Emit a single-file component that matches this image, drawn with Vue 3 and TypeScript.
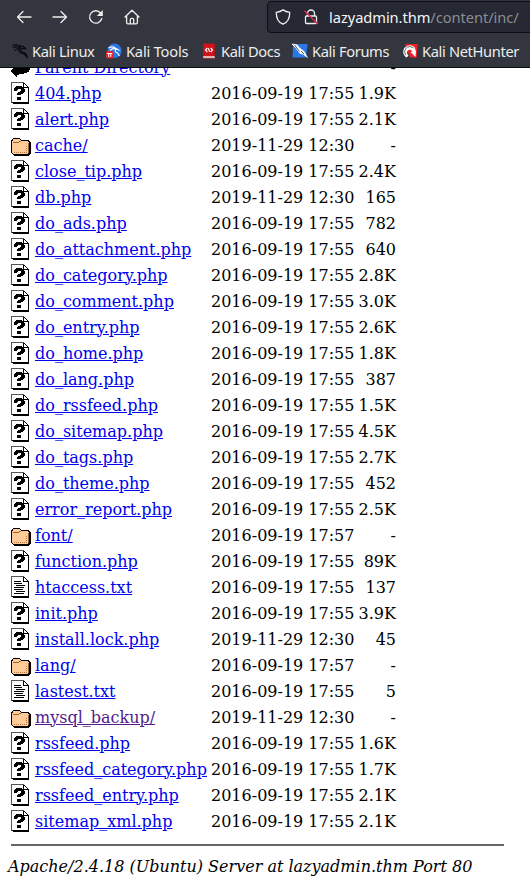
<script setup lang="ts">
type Kind = 'unknown' | 'folder' | 'text' | 'back'
interface Entry { name: string; date: string; size: string; kind: Kind; visited?: boolean }

const OLD = '2016-09-19 17:55'
const OLD_DIR = '2016-09-19 17:57'
const NEW = '2019-11-29 12:30'

function entry(name: string, size: string, date: string = OLD, kind: Kind = 'unknown', visited = false): Entry {
  return { name, size, date, kind, visited }
}

const entries: Entry[] = [
  entry('Parent Directory', '-', '', 'back'),
  entry('404.php', '1.9K'),
  entry('alert.php', '2.1K'),
  entry('cache/', '-', NEW, 'folder'),
  entry('close_tip.php', '2.4K'),
  entry('db.php', '165', NEW),
  entry('do_ads.php', '782'),
  entry('do_attachment.php', '640'),
  entry('do_category.php', '2.8K'),
  entry('do_comment.php', '3.0K'),
  entry('do_entry.php', '2.6K'),
  entry('do_home.php', '1.8K'),
  entry('do_lang.php', '387'),
  entry('do_rssfeed.php', '1.5K'),
  entry('do_sitemap.php', '4.5K'),
  entry('do_tags.php', '2.7K'),
  entry('do_theme.php', '452'),
  entry('error_report.php', '2.5K'),
  entry('font/', '-', OLD_DIR, 'folder'),
  entry('function.php', '89K'),
  entry('htaccess.txt', '137', OLD, 'text'),
  entry('init.php', '3.9K'),
  entry('install.lock.php', '45', NEW),
  entry('lang/', '-', OLD_DIR, 'folder'),
  entry('lastest.txt', '5', OLD, 'text'),
  entry('mysql_backup/', '-', NEW, 'folder', true),
  entry('rssfeed.php', '1.6K'),
  entry('rssfeed_category.php', '1.7K'),
  entry('rssfeed_entry.php', '2.1K'),
  entry('sitemap_xml.php', '2.1K'),
]
</script>

<template>
  <div class="window">
    <header class="chrome">
      <div class="toolbar">
        <svg class="nav" viewBox="0 0 16 16"><path d="M15 8H1.5M7 2.5L1.5 8L7 13.5" /></svg>
        <svg class="nav" viewBox="0 0 16 16"><path d="M1 8h13.500M9 2.500L14.500 8L9 13.500" /></svg>
        <svg class="nav" viewBox="0 0 16 16"><path d="M13.800 9.500A6.200 6.200 0 1 1 12.600 4" /><path class="solid" d="M14.800 1v6H8.800z" /></svg>
        <svg class="nav" viewBox="0 0 16 16"><path d="M1 8L8 1.300L15 8M2.600 7v6.500q0 1.300 1.300 1.300h8.200q1.300 0 1.300-1.300V7M6.300 14.500v-4q0-1.200 1.200-1.200h1q1.200 0 1.200 1.200v4" /></svg>
        <div class="address">
          <svg class="shield" viewBox="0 0 16 16"><path d="M8 .9C6 2.300 3.500 3.100 1.300 3.400C1.200 9 3.700 13.400 8 15.200C12.300 13.400 14.800 9 14.700 3.400C12.500 3.100 10 2.300 8 .9z" /></svg>
          <svg class="lock" viewBox="0 0 16 16"><path d="M4.500 7V4.500a3.500 3.500 0 0 1 7 0V7M3.500 7h9q1 0 1 1v5.500q0 1-1 1h-9q-1 0-1-1V8q0-1 1-1z" /><path class="slash" d="M1.500 1.800L14.800 15" /></svg>
          <span class="url">lazyadmin.thm<span class="path">/content/inc/</span></span>
        </div>
      </div>
      <nav class="bookmarks">
        <a class="bookmark">
          <svg viewBox="0 0 16 16"><path class="dragon" d="M.5 2.500Q5 .8 9 3.400M1 5Q5 3 9 4.800M2.500 8Q4.500 5.500 8.500 5.200M8 3Q11 2.500 13.500 5.500L10.500 5.400Q8 6.500 9 8.300C11 9.800 15 9 15.400 15Q13.500 10.700 9.800 10.400Q6 9.500 7.500 5" /></svg>
          Kali Linux
        </a>
        <a class="bookmark">
          <svg viewBox="0 0 16 16"><circle cx="8.500" cy="7.800" r="7.200" fill="#2878e8" /><path d="M2.500 5Q7 2.500 10 5.600L13.500 7.500M4 7.500Q7 4.500 10 6.500Q8 9 11.500 10L13.500 13" fill="none" stroke="#fff" stroke-width="1.200" /><rect x="0" y="8" width="7.500" height="7.500" rx="2" fill="#e4232c" /><path d="M1.200 10.500h5M2.700 10.500v3.500M4.800 10.500v3.500" stroke="#fff" fill="none" /></svg>
          Kali Tools
        </a>
        <a class="bookmark">
          <svg viewBox="0 0 16 16"><path d="M2.200.500h11.500v12.800H2.200z" fill="#d31118" /><path d="M2.200 13.200h11.500v2H2.200z" fill="#f2dede" /><path d="M2.200 14.800h11.500v.7H2.200z" fill="#c2161a" /><path d="M6.300 5L4.500 7l1.800 2M9.700 5l1.800 2l-1.800 2M7.300 5.200l1.400 3.700" stroke="#fff" stroke-width="1.200" fill="none" /></svg>
          Kali Docs
        </a>
        <a class="bookmark">
          <svg viewBox="0 0 16 16"><path d="M1.200 1h14.600l-2 13.500H.5z" fill="#2878e8" /><path d="M0 1l5 .8l3 3.700l3.700 2.500l3.800 6.500l-4.200-3.200l-3.500-1l-3.300-4.500z" fill="#fff" stroke="#fff" stroke-width=".7" /><path d="M2.500 2l5 6.500M9 8l3 3" stroke="#252830" fill="none" stroke-width=".8" /></svg>
          Kali Forums
        </a>
        <a class="bookmark">
          <svg viewBox="0 0 16 16"><path d="M3 1h12.800l-1 13.500H8z" fill="#ed2026" /><path d="M12.500 4Q7 .2 2.200 5Q-.5 11 4.500 14.500L6.500 12.700Q3.500 9 6.500 7Q9 6 10.500 8.500L8.500 9L13.500 14L14 8.500z" fill="#fff" /><path d="M3.800 12Q1 7 5.500 4Q9 2.800 11.500 5" stroke="#252830" fill="none" stroke-width=".7" /></svg>
          Kali NetHunter
        </a>
      </nav>
    </header>

    <main class="page">
      <ul class="listing">
        <li v-for="item in entries" :key="item.name" class="row">
          <svg v-if="item.kind === 'unknown' || item.kind === 'text'" class="icon" viewBox="0 0 20 22" shape-rendering="crispEdges">
            <path d="M0 0h13v1h1v1h1v1h1v1h1v1h1v17H2v-1H0z" fill="#000" />
            <path d="M1 1h11v5h5v14H1z" fill="#fff" />
            <path d="M13 2h1v1h1v1h1v1h-3z" fill="#fff" />
            <path d="M0 0h1v21H0zM0 0h13v1H0z" fill="#555" />
            <path v-if="item.kind === 'unknown'" d="M5 4h6v1h1v1h1v1h1v3h-1v1h-1v1h-2v1H6v-2h1v-1h2V9h1V7H7v1H6v1H3V6h1V5h1zM6 15h4v3H6z" fill="#000" />
            <path v-else d="M3 5h7v1H3zM3 7h8v1H3zM5 9h9v1H5zM3 11h10v1H3zM3 13h9v1H3zM5 15h9v1H5zM3 17h10v1H3z" fill="#000" />
          </svg>
          <svg v-else-if="item.kind === 'folder'" class="icon" viewBox="0 -2 20 22" shape-rendering="crispEdges">
            <path d="M2 2h7v1h1v1h8v1h1v1h1v12h-1v1h-1v1H3v-1H2v-1H1v-1H0V4h1V3h1z" fill="#000" />
            <path d="M2 3h7v1h1v1h7v1h1v11h-1v1H2v-1H1V5h1z" fill="#ffcc99" />
            <path d="M2 6h6v1H2zM8 5h2v1H8zM17 7h1v10h-1z" fill="#996633" />
            <path d="M3 16h1v1H3zM5 16h1v1H5zM7 16h1v1H7zM9 16h1v1H9zM11 16h1v1h-1zM13 16h1v1h-1zM15 16h1v1h-1zM15 14h1v1h-1zM15 12h1v1h-1zM15 10h1v1h-1z" fill="#b87542" />
          </svg>
          <svg v-else class="icon" viewBox="0 0 20 22" shape-rendering="crispEdges">
            <path d="M0 14h1v-1h1v-1h2v-2h3v1h6V9h6v5h-1v2h-2v1h-3v1H8v1H6v2H5v-1H4v-1H3v-1H2v-1H1v-1H0z" fill="#000" />
          </svg>
          <a class="name" :class="{ visited: item.visited }">{{ item.name }}</a>
          <span class="date">{{ item.date }}</span>
          <span class="size">{{ item.size }}</span>
        </li>
      </ul>
      <hr class="rule">
      <address class="server">Apache/2.4.18 (Ubuntu) Server at lazyadmin.thm Port 80</address>
    </main>
  </div>
</template>

<style>
body { margin: 0; background: #fff; }
</style>

<style scoped>
.window { width: 530px; height: 884px; overflow: hidden; display: flex; flex-direction: column; background: #fff; }
.chrome { height: 67px; flex: none; box-sizing: content-box; background: #33363f; border-bottom: 1px solid #0c0d10; font-family: "Noto Sans", sans-serif; font-size: 14.67px; color: #eeeeec; }
.toolbar { height: 33px; display: flex; align-items: center; padding-left: 16px; gap: 20px; }
.nav { width: 16px; height: 16px; flex: none; fill: none; stroke: #eeeeec; stroke-width: 1.300; stroke-linecap: round; stroke-linejoin: round; }
.nav .solid { fill: #eeeeec; stroke: none; }
.address { box-sizing: border-box; width: 300px; height: 32px; flex: none; margin-left: 107px; display: flex; align-items: center; padding-left: 7px; border: 1px solid #0c0d10; border-radius: 4px; background: #262933; }
.shield, .lock { width: 16px; height: 16px; flex: none; fill: none; stroke: #eeeeec; stroke-width: 1.300; }
.lock { margin-left: 12px; }
.lock .slash { stroke: #e22850; stroke-width: 1.400; }
.url { margin-left: 10px; white-space: nowrap; color: #f5f5f5; letter-spacing: -0.06px; }
.path { color: #8b8d92; }
.bookmarks { display: grid; grid-template-columns: 94px 95px 91px 110px 128px; height: 34px; padding: 2px 0 0 12px; box-sizing: border-box; align-items: center; }
.bookmark { display: flex; align-items: center; gap: 4px; white-space: nowrap; line-height: 20px; letter-spacing: -0.35px; }
.bookmark:nth-child(2) { letter-spacing: -0.2px; }
.bookmark svg { width: 16px; height: 16px; flex: none; }
.dragon { fill: none; stroke: #08090b; stroke-width: 1.200; }
.page { flex: 1; min-height: 0; overflow: hidden; font-family: "DejaVu Serif", serif; font-size: 16px; color: #000; }
.listing { list-style: none; margin: -14px 0 0; padding: 0 0 0 11px; }
.row { display: grid; grid-template-columns: 24px 176px 144px 41px; height: 26px; align-items: center; line-height: 19px; white-space: nowrap; }
.icon { width: 20px; height: 22px; display: block; }
.name { color: #0000ee; text-decoration: underline; }
.name.visited { color: #551a8b; }
.size { text-align: right; }
.rule { width: 493px; height: 2px; margin: 10px 0 0 11px; border: 0; background: #666; }
.server { margin: 11px 0 0 8px; line-height: 19px; font-style: italic; white-space: nowrap; }
</style>
